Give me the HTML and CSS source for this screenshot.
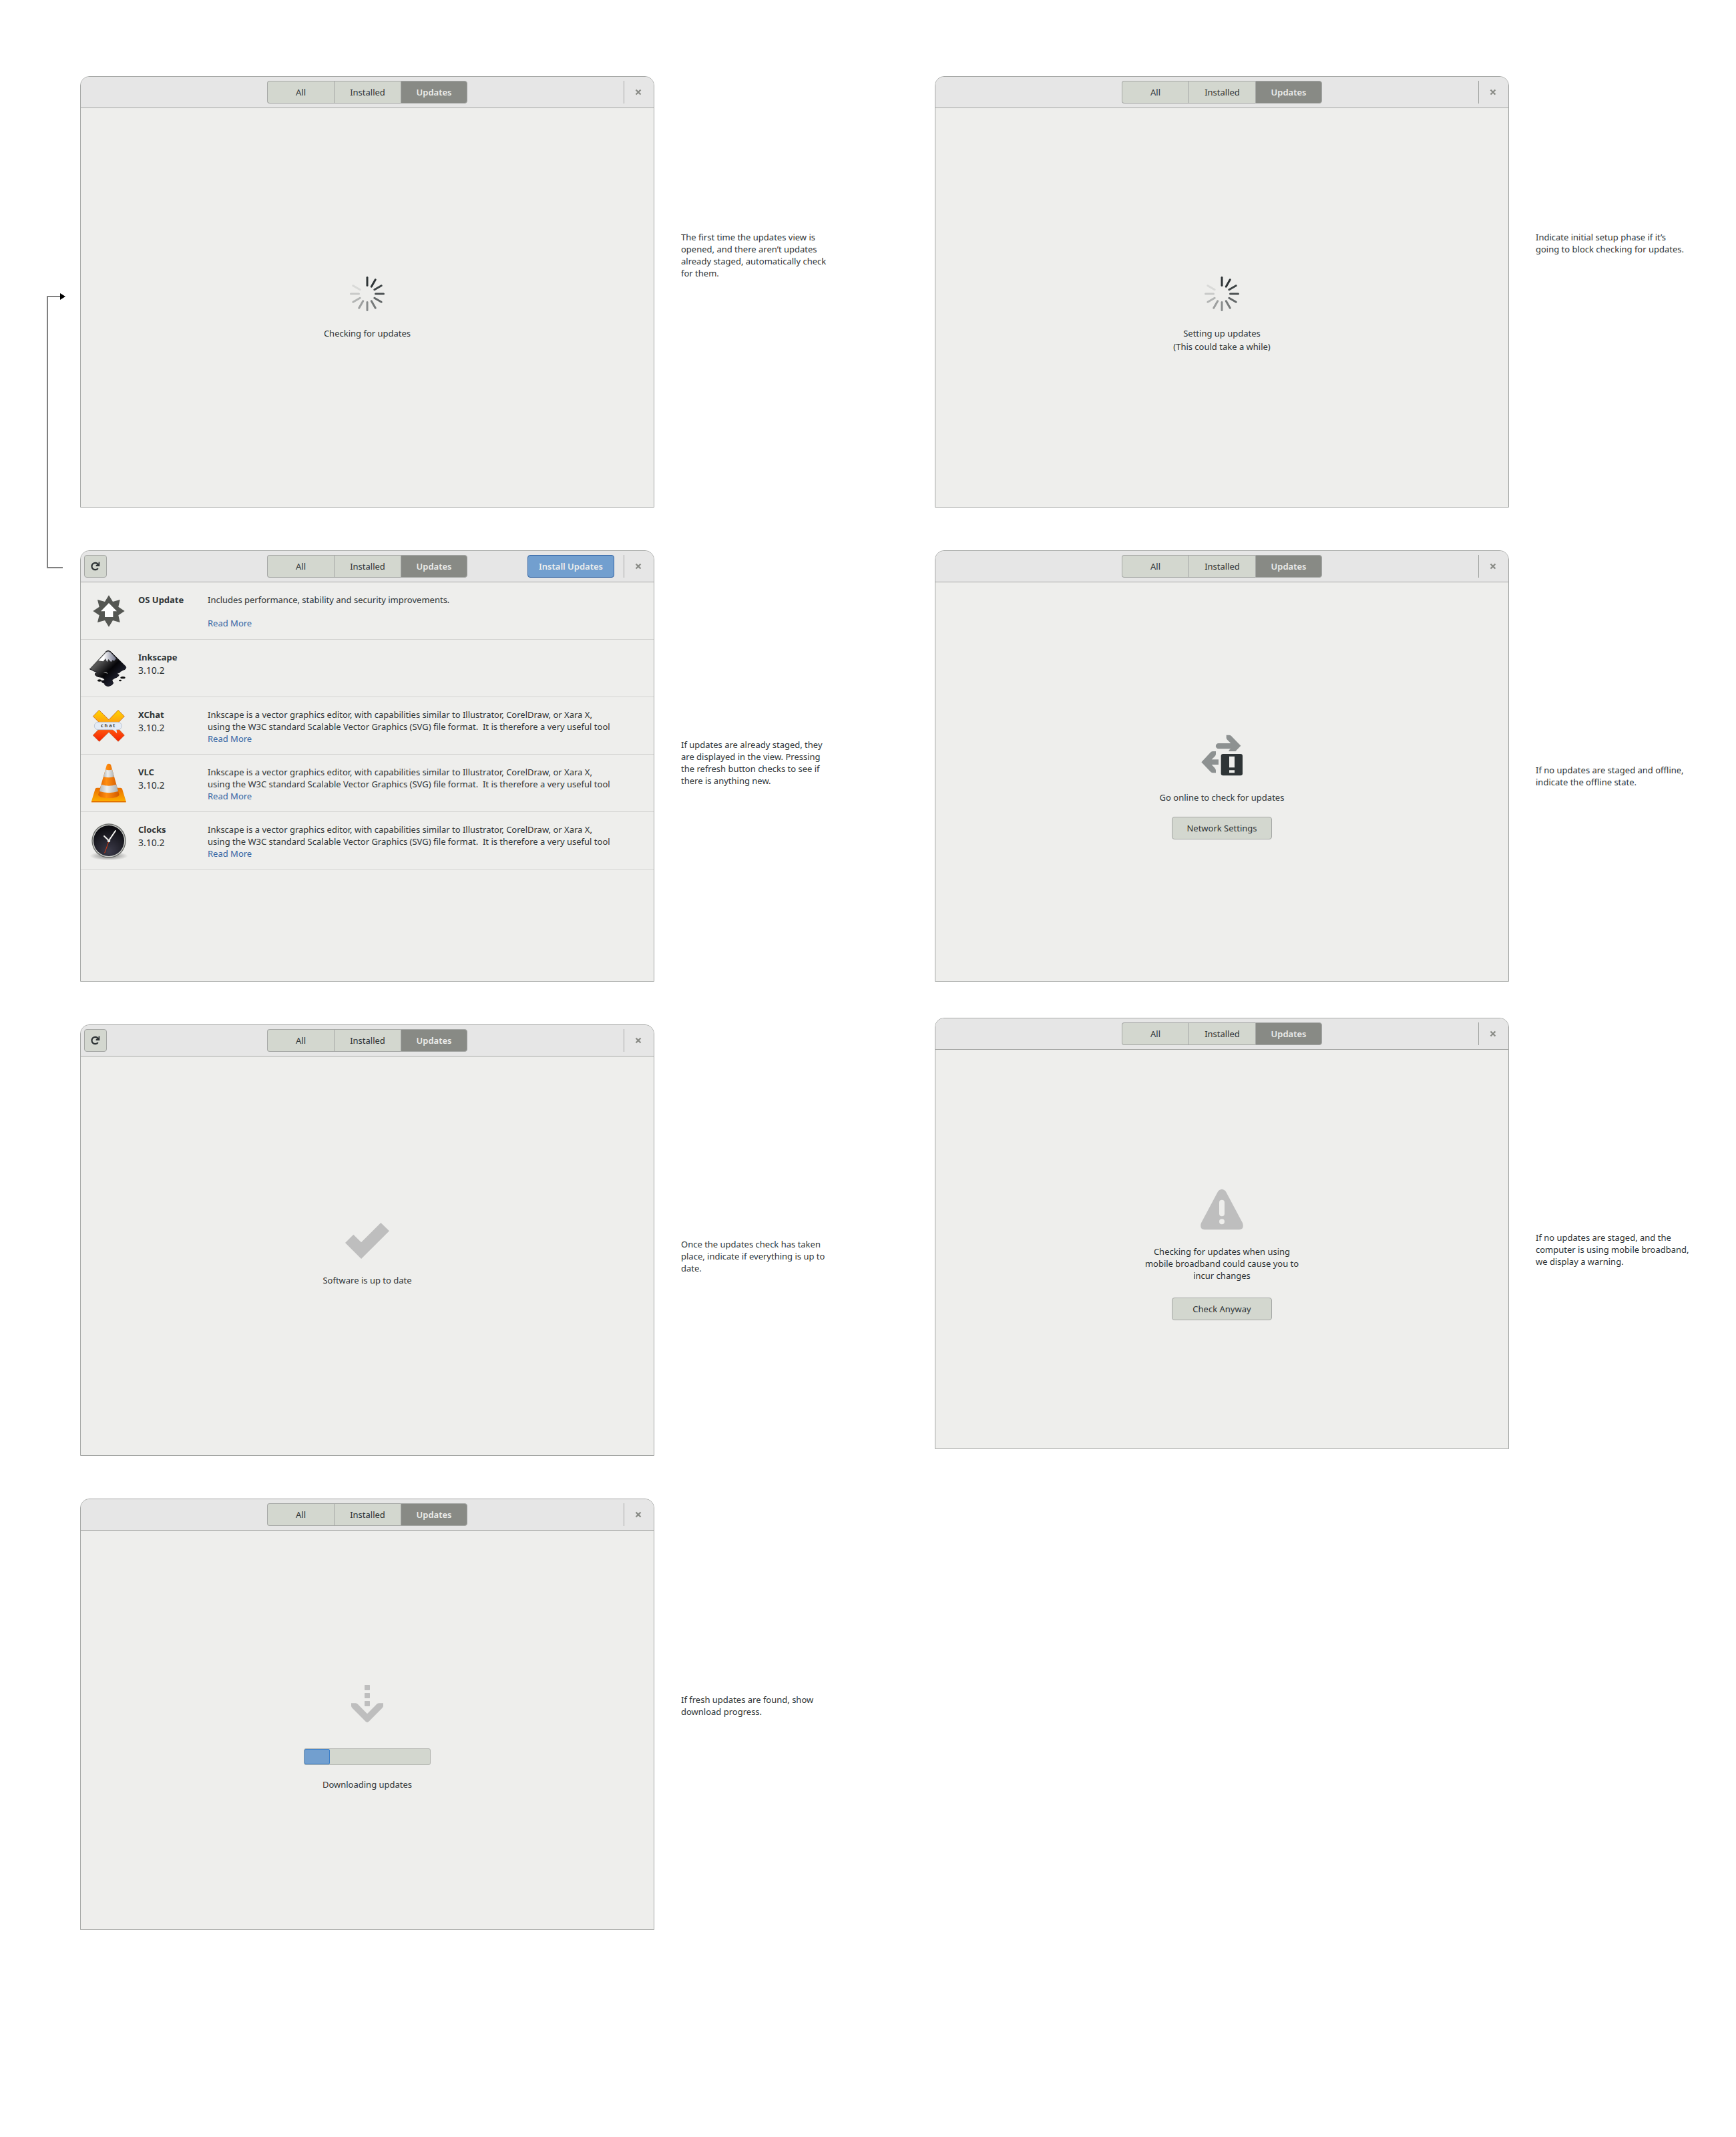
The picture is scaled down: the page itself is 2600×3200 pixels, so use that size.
FILE: index.html
```
<!DOCTYPE html>
<html lang="en">
<head>
<meta charset="utf-8">
<title>Software: updates view</title>
<link rel="stylesheet" href="styles.css">
</head>
<body>
<svg class="defs" aria-hidden="true">
  <defs>
    <symbol id="i-close" viewBox="0 0 10 10"><path d="M1.500 1.500 8.500 8.500M8.500 1.500 1.500 8.500" fill="none" stroke="#888a85" stroke-width="2.200"/></symbol>
    <symbol id="i-refresh" viewBox="0 0 16 16"><path d="M11.800 11.200A5.200 5.200 0 1 1 11.600 4.600" fill="none" stroke="#2e3436" stroke-width="2.200"/><path d="M14.300 1.600V8H8.600V6.400L12.600 3.400V1.600z" fill="#2e3436"/></symbol>
    <symbol id="i-spinner" viewBox="-27 -27 54 54">
      <g stroke="#2e3436" stroke-width="3" stroke-linecap="round">
        <path d="M0-12.500V-24.500"/>
        <path d="M0-12.500V-24.500" transform="rotate(30)"/>
        <path d="M0-12.500V-24.500" transform="rotate(60)" opacity=".9"/>
        <path d="M0-12.500V-24.500" transform="rotate(90)" opacity=".82"/>
        <path d="M0-12.500V-24.500" transform="rotate(120)" opacity=".72"/>
        <path d="M0-12.500V-24.500" transform="rotate(150)" opacity=".62"/>
        <path d="M0-12.500V-24.500" transform="rotate(180)" opacity=".52"/>
        <path d="M0-12.500V-24.500" transform="rotate(210)" opacity=".42"/>
        <path d="M0-12.500V-24.500" transform="rotate(240)" opacity=".3"/>
        <path d="M0-12.500V-24.500" transform="rotate(270)" opacity=".19"/>
        <path d="M0-12.500V-24.500" transform="rotate(300)" opacity=".1"/>
      </g>
    </symbol>
  </defs>
</svg>

<main class="board">
  <section class="flow">
    <svg class="connector" width="30" height="420" viewBox="0 0 30 420" aria-hidden="true">
      <path d="M24 412H1V6H22" fill="none" stroke="#808080" stroke-width="2"/>
      <path d="M20 1 28 6 20 11z" fill="#000"/>
    </svg>

    <article class="step">
      <div class="window">
        <header class="bar">
          <div class="bar-start"></div>
          <nav class="tabs"><button>All</button><button>Installed</button><button class="on">Updates</button></nav>
          <div class="bar-end"><button class="close" aria-label="Close"><svg width="10" height="10"><use href="#i-close"/></svg></button></div>
        </header>
        <div class="stage stage-spinner">
          <svg width="54" height="54"><use href="#i-spinner"/></svg>
          <p>Checking for updates</p>
        </div>
      </div>
      <p class="note note-high">The first time the updates view is opened, and there aren’t updates already staged, automatically check for them.</p>
    </article>

    <article class="step">
      <div class="window">
        <header class="bar">
          <div class="bar-start"><button class="refresh" aria-label="Refresh"><svg width="16" height="16"><use href="#i-refresh"/></svg></button></div>
          <nav class="tabs"><button>All</button><button>Installed</button><button class="on">Updates</button></nav>
          <div class="bar-end"><button class="install">Install Updates</button><button class="close" aria-label="Close"><svg width="10" height="10"><use href="#i-close"/></svg></button></div>
        </header>
        <ul class="updates">
          <li>
            <svg width="60" height="60" viewBox="0 0 180 180"><path d="M90 19 108 48 140 39 133 71 161 90 133 109 140 141 108 132 90 161 72 132 39 141 47 109 19 90 47 71 39 39 72 48z" fill="#555753"/><path d="M90 54 126 91H109V117H72V91H54z" fill="#fff"/></svg>
            <div class="app"><h3>OS Update</h3></div>
            <div class="about"><p>Includes performance, stability and security improvements.</p><a class="last" href="#os">Read More</a></div>
          </li>
          <li>
            <svg width="60" height="60" viewBox="0 0 180 180">
              <defs><linearGradient id="ink" x1="0" y1="0" x2="1" y2="1"><stop offset=".3" stop-color="#555"/><stop offset=".55" stop-color="#050508"/><stop offset="1" stop-color="#3a3e58"/></linearGradient>
              <linearGradient id="snow" x1="0" y1="0" x2="1" y2="0"><stop offset=".3" stop-color="#fff"/><stop offset="1" stop-color="#6c7088"/></linearGradient></defs>
              <path d="M76 14Q87 5 98 14L165 80Q172 92 155 97 140 103 138 109 120 112 136 119 134 127 118 133 97 142 109 152 112 164 87 170 68 166 71 157 54 152 58 145 76 145 67 135 60 129 40 127 22 119 31 110 50 109 25 103 15 97 3 92 9 80z" fill="url(#ink)" stroke="#15151c" stroke-width="3"/>
              <path d="M77 19Q87 10 97 19L123 45 113 57 108 51 100 61 88 48 82 61 75 45 65 58 43 55z" fill="url(#snow)"/>
              <path d="M65 108Q78 103 87 113 77 111 65 108z" fill="#aaa"/>
              <ellipse cx="48" cy="144" rx="9" ry="5" fill="#111"/><ellipse cx="153" cy="131" rx="11" ry="5" fill="#111"/><ellipse cx="141" cy="144" rx="6" ry="4" fill="#111"/>
            </svg>
            <div class="app"><h3>Inkscape</h3><p>3.10.2</p></div>
          </li>
          <li>
            <svg width="60" height="60" viewBox="0 0 180 180">
              <defs><linearGradient id="xc" x1="0" y1="0" x2="0" y2="1"><stop offset="0" stop-color="#ffd500"/><stop offset=".45" stop-color="#ff9a12"/><stop offset=".6" stop-color="#ff5a10"/><stop offset="1" stop-color="#f42000"/></linearGradient></defs>
              <path d="M46 19 90 62 132 19 160 47 119 89 160 132 132 160 90 118 47 160 19 132 61 89 19 47z" fill="url(#xc)" stroke="#b84a10" stroke-width="2"/>
              <rect x="25" y="73" width="123" height="34" rx="17" fill="#e4ebf5" stroke="#a8b4c6" stroke-width="2"/>
              <path d="M106 105 127 124 124 105z" fill="#e4ebf5"/>
              <text x="86" y="97" text-anchor="middle" class="chat">c h a t</text>
            </svg>
            <div class="app"><h3>XChat</h3><p>3.10.2</p></div>
            <div class="about"><p>Inkscape is a vector graphics editor, with capabilities similar to Illustrator, CorelDraw, or Xara X,<br>using the W3C standard Scalable Vector Graphics (SVG) file format.&nbsp; It is therefore a very useful tool</p><a href="#xchat">Read More</a></div>
          </li>
          <li>
            <svg width="60" height="60" viewBox="0 0 180 180">
              <defs><linearGradient id="base" x1="0" y1="0" x2="0" y2="1"><stop offset="0" stop-color="#e86d00"/><stop offset="1" stop-color="#ffb100"/></linearGradient>
              <linearGradient id="cone" x1="0" y1="0" x2="1" y2="0"><stop offset="0" stop-color="#d96000"/><stop offset=".4" stop-color="#ff8d10"/><stop offset="1" stop-color="#d05800"/></linearGradient>
              <linearGradient id="band" x1="0" y1="0" x2="1" y2="0"><stop offset="0" stop-color="#b4b6b6"/><stop offset=".4" stop-color="#eceeee"/><stop offset="1" stop-color="#adb0b0"/></linearGradient></defs>
              <path d="M29 115Q30 110 36 110H142Q149 110 150 115L167 170V175H12V170z" fill="url(#base)"/><path d="M12 171H167V175H12z" fill="#d65a00"/>
              <path d="M81 6Q90-1 99 6L137 142Q133 156 90 156 46 156 42 142z" fill="url(#cone)"/>
              <path d="M75 28Q90 34 105 28L114 60Q90 68 66 60z" fill="url(#band)"/><path d="M56 95Q90 107 124 95L132 126Q90 139 48 126z" fill="url(#band)"/>
            </svg>
            <div class="app"><h3>VLC</h3><p>3.10.2</p></div>
            <div class="about"><p>Inkscape is a vector graphics editor, with capabilities similar to Illustrator, CorelDraw, or Xara X,<br>using the W3C standard Scalable Vector Graphics (SVG) file format.&nbsp; It is therefore a very useful tool</p><a href="#vlc">Read More</a></div>
          </li>
          <li>
            <svg width="60" height="60" viewBox="0 0 180 180">
              <defs><radialGradient id="face" cx=".5" cy=".85" r=".8"><stop offset="0" stop-color="#3c3b4a"/><stop offset="1" stop-color="#0c0c10"/></radialGradient>
              <radialGradient id="shade"><stop offset="0" stop-color="#000" stop-opacity=".5"/><stop offset="1" stop-color="#000" stop-opacity="0"/></radialGradient></defs>
              <ellipse cx="90" cy="158" rx="86" ry="20" fill="url(#shade)"/>
              <circle cx="90" cy="90" r="77" fill="#6b6d6a"/><circle cx="90" cy="90" r="73" fill="#c8cac6"/><circle cx="90" cy="90" r="69" fill="url(#face)"/>
              <path d="M90 92 71 145" stroke="#d83a10" stroke-width="3"/><path d="M69 69 90 89 120 45" fill="none" stroke="#f2f2ee" stroke-width="6" stroke-linecap="round"/><circle cx="90" cy="90" r="7" fill="#e6e6e2"/>
            </svg>
            <div class="app"><h3>Clocks</h3><p>3.10.2</p></div>
            <div class="about"><p>Inkscape is a vector graphics editor, with capabilities similar to Illustrator, CorelDraw, or Xara X,<br>using the W3C standard Scalable Vector Graphics (SVG) file format.&nbsp; It is therefore a very useful tool</p><a href="#clocks">Read More</a></div>
          </li>
        </ul>
      </div>
      <p class="note note-mid">If updates are already staged, they are displayed in the view. Pressing the refresh button checks to see if there is anything new.</p>
    </article>

    <article class="step">
      <div class="window">
        <header class="bar">
          <div class="bar-start"><button class="refresh" aria-label="Refresh"><svg width="16" height="16"><use href="#i-refresh"/></svg></button></div>
          <nav class="tabs"><button>All</button><button>Installed</button><button class="on">Updates</button></nav>
          <div class="bar-end"><button class="close" aria-label="Close"><svg width="10" height="10"><use href="#i-close"/></svg></button></div>
        </header>
        <div class="stage stage-check">
          <svg width="66" height="54" viewBox="231 94 198 162"><path d="M231 184 268 147 303 182 391 94 429 131 303 256z" fill="#bebebe"/></svg>
          <p>Software is up to date</p>
        </div>
      </div>
      <p class="note note-low">Once the updates check has taken place, indicate if everything is up to date.</p>
    </article>

    <article class="step">
      <div class="window">
        <header class="bar">
          <div class="bar-start"></div>
          <nav class="tabs"><button>All</button><button>Installed</button><button class="on">Updates</button></nav>
          <div class="bar-end"><button class="close" aria-label="Close"><svg width="10" height="10"><use href="#i-close"/></svg></button></div>
        </header>
        <div class="stage stage-download">
          <svg width="56" height="58" viewBox="306 128 168 174"><g fill="#bebebe"><rect x="378" y="131" width="24" height="24" rx="2"/><rect x="378" y="167" width="24" height="24" rx="2"/><rect x="378" y="203" width="24" height="24" rx="2"/><path d="M318 213H337Q343 213 348 218L390 261 432 218Q437 213 443 213H462V225Q462 230 457 235L396 297Q390 302 384 297L323 235Q318 230 318 225z"/></g></svg>
          <div class="progress" role="progressbar" aria-label="Download progress" aria-valuenow="20"><span style="width:20%"></span></div>
          <p>Downloading updates</p>
        </div>
      </div>
      <p class="note note-progress">If fresh updates are found, show download progress.</p>
    </article>
  </section>

  <section class="flow flow-alt">
    <article class="step">
      <div class="window">
        <header class="bar">
          <div class="bar-start"></div>
          <nav class="tabs"><button>All</button><button>Installed</button><button class="on">Updates</button></nav>
          <div class="bar-end"><button class="close" aria-label="Close"><svg width="10" height="10"><use href="#i-close"/></svg></button></div>
        </header>
        <div class="stage stage-spinner">
          <svg width="54" height="54"><use href="#i-spinner"/></svg>
          <p>Setting up updates</p>
          <p class="sub">(This could take a while)</p>
        </div>
      </div>
      <p class="note note-high">Indicate initial setup phase if it’s going to block checking for updates.</p>
    </article>

    <article class="step">
      <div class="window">
        <header class="bar">
          <div class="bar-start"></div>
          <nav class="tabs"><button>All</button><button>Installed</button><button class="on">Updates</button></nav>
          <div class="bar-end"><button class="close" aria-label="Close"><svg width="10" height="10"><use href="#i-close"/></svg></button></div>
        </header>
        <div class="stage stage-network">
          <svg width="64" height="62" viewBox="354 58 192 186"><g fill="#8d9191"><path d="M470 60H482Q488 60 492 64L535 108 511 133H480Q482 126 490 122H435A12 12 0 0 1 435 97H490L475 82Q470 78 470 72z"/><path d="M423 133H410Q405 133 400 137L358 182 400 226Q405 230 410 230H423V219Q423 214 418 208L404 193H435V170H404L418 156Q423 151 423 146z"/></g><rect x="446" y="145" width="97" height="97" rx="9" fill="#2e3436"/><path d="M483 156H507V206H483zM483 218H507V230H483z" fill="#eeeeec"/></svg>
          <p>Go online to check for updates</p>
          <button class="action">Network Settings</button>
        </div>
      </div>
      <p class="note note-low">If no updates are staged and offline, indicate the offline state.</p>
    </article>

    <article class="step">
      <div class="window">
        <header class="bar">
          <div class="bar-start"></div>
          <nav class="tabs"><button>All</button><button>Installed</button><button class="on">Updates</button></nav>
          <div class="bar-end"><button class="close" aria-label="Close"><svg width="10" height="10"><use href="#i-close"/></svg></button></div>
        </header>
        <div class="stage stage-warning">
          <svg width="64" height="62" viewBox="354 58 192 186"><path d="M450 60Q462 61 469 73L543 212Q552 240 528 242H372Q348 240 357 212L431 73Q438 61 450 60z" fill="#bebebe"/><rect x="438" y="108" width="24" height="74" rx="12" fill="#eeeeec"/><circle cx="450" cy="206" r="12" fill="#eeeeec"/></svg>
          <p>Checking for updates when using mobile broadband could cause you to incur changes</p>
          <button class="action">Check Anyway</button>
        </div>
      </div>
      <p class="note note-low">If no updates are staged, and the computer is using mobile broadband, we display a warning.</p>
    </article>
  </section>
</main>
</body>
</html>
```
FILE: styles.css
```
* { box-sizing: border-box; }
body {
  margin: 0;
  background: #fff;
  color: #2e3436;
  font: 13px/18px "Noto Sans", "Open Sans", sans-serif;
}
p, h3, ul { margin: 0; padding: 0; }
button { font: inherit; color: inherit; padding: 0; }
svg { display: block; flex: none; }
.defs { position: absolute; width: 0; height: 0; }

.board {
  display: grid;
  grid-template-columns: 1fr 1fr;
  gap: 140px;
  align-items: start;
  padding: 114px 60px 310px 120px;
}
.flow { position: relative; display: grid; gap: 64px; }
.connector { position: absolute; left: -50px; top: 324px; }
.step { display: grid; grid-template-columns: 1fr 240px; gap: 40px; }
.flow-alt .step:last-child { margin-top: -10px; }

.window {
  min-height: 646px;
  background: #eeeeec;
  border: 1px solid #a5a7a5;
  border-radius: 14px 14px 0 0;
}
.bar {
  display: grid;
  grid-template-columns: 1fr 300px 1fr;
  align-items: center;
  height: 47px;
  background: #e6e6e6;
  border-bottom: 1px solid #a5a7a5;
  border-radius: 13px 13px 0 0;
}
.bar-start { padding-left: 5px; }
.bar-end { display: flex; justify-content: flex-end; gap: 14px; }
.tabs { display: grid; grid-template-columns: repeat(3, 1fr); }
.tabs button {
  height: 34px;
  background: #d3d7cf;
  border: 1px solid #a5a7a5;
  border-right-width: 0;
}
.tabs button:first-child { border-radius: 4px 0 0 4px; }
.tabs button:last-child { border-right-width: 1px; border-radius: 0 4px 4px 0; }
.tabs .on { background: #888a85; color: #eeeeec; font-weight: 600; }
.refresh, .action {
  display: grid;
  place-items: center;
  width: 34px;
  height: 34px;
  background: #d3d7cf;
  border: 1px solid #a5a7a5;
  border-radius: 4px;
}
.install {
  width: 130px;
  height: 34px;
  background: #729fcf;
  border: 1px solid #3465a4;
  border-radius: 4px;
  color: #eeeeec;
  font-weight: 600;
}
.close {
  display: grid;
  place-items: center;
  width: 45px;
  height: 34px;
  padding-right: 2px;
  background: none;
  border: 0;
  border-left: 1px solid #a5a7a5;
}

.updates { list-style: none; }
.updates li {
  display: grid;
  grid-template-columns: 60px 90px minmax(0, 1fr);
  column-gap: 14px;
  height: 86px;
  padding: 13px 36px 0 12px;
  border-bottom: 1px solid #d3d3d1;
}
.app { padding-top: 4px; }
.app h3 { font-size: 13px; font-weight: 700; }
.app p { padding-top: 2px; font-size: 14px; }
.about { display: grid; align-content: start; padding-top: 4px; }
.about a { justify-self: start; color: #3465a4; text-decoration: none; }
.about .last { padding-top: 17px; }
.chat { font: 600 22px "Noto Sans", sans-serif; fill: #222; }

.stage { display: flex; flex-direction: column; align-items: center; text-align: center; }
.stage p { width: 240px; padding-top: 23px; }
.stage .sub { padding-top: 2px; }
.stage-spinner { padding-top: 251px; }
.stage-check { padding-top: 249px; }
.stage-network { padding-top: 228px; }
.stage-download { padding-top: 230px; }
.stage-warning { padding-top: 208px; }
.action { width: 150px; margin-top: 20px; }
.stage-warning .action { margin-top: 24px; }
.progress {
  width: 190px;
  height: 25px;
  margin-top: 38px;
  background: #d3d7cf;
  border: 1px solid #b4b6b1;
  border-radius: 3px;
}
.progress span {
  display: block;
  height: 23px;
  background: #729fcf;
  border: 1px solid #3a7fca;
  border-radius: 2px;
}
.stage .progress + p { padding-top: 20px; }

.note { padding-right: 8px; }
.note-high { padding-top: 232px; }
.note-mid { padding-top: 282px; }
.note-progress { padding-top: 292px; }
.note-low { padding-top: 320px; }
```
